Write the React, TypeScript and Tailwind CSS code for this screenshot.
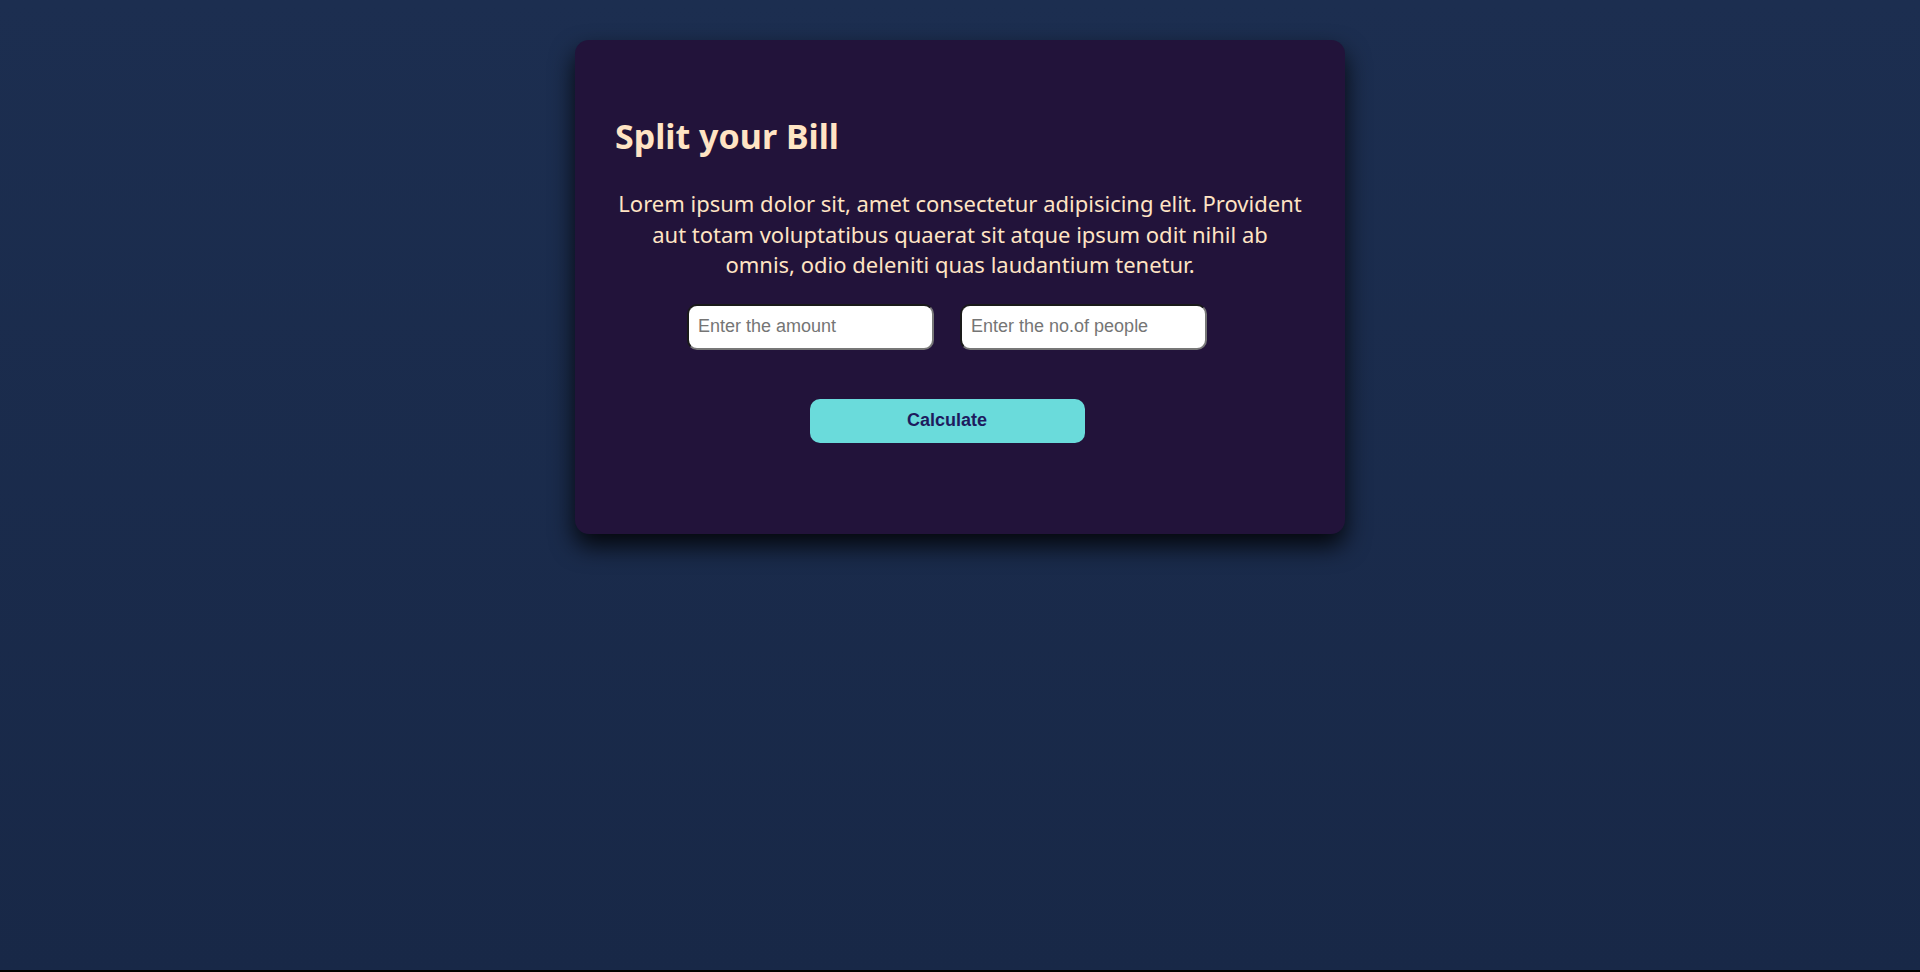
import { useState } from "react";

export default function App() {
  const [amount, setAmount] = useState("");
  const [people, setPeople] = useState("");

  return (
    <div className="h-[972px] bg-black">
      <div className="flex h-[970px] justify-center bg-gradient-to-b from-[#1c2e50] to-[#182847] pt-10">
        <div className="h-[494px] w-[770px] rounded-[14px] bg-[#22133a] px-10 pt-[74px] shadow-[0_12px_24px_rgba(0,0,0,0.85)]">
          <h1 className="font-['Noto_Sans',sans-serif] text-[34px] font-bold leading-[44px] text-[#ffe4c4]">
            Split your Bill
          </h1>

          <p className="mt-[30px] text-center font-['Noto_Sans',sans-serif] text-[22px] leading-[30.6px] text-[#ffe4c4]">
            Lorem ipsum dolor sit, amet consectetur adipisicing elit. Provident
            <br />
            aut totam voluptatibus quaerat sit atque ipsum odit nihil ab
            <br />
            omnis, odio deleniti quas laudantium tenetur.
          </p>

          <div className="mt-[24px] flex justify-center">
            <input
              type="text"
              value={amount}
              onChange={(e) => setAmount(e.target.value)}
              placeholder="Enter the amount"
              className="mr-[26px] h-[46px] w-[247px] rounded-[10px] border-2 border-t-[#1a1a1a] border-l-[#1a1a1a] border-b-[#777] border-r-[#777] bg-white pl-[9px] pr-2 font-['Liberation_Sans',sans-serif] text-[18px] text-black outline-none placeholder:text-[#757575]"
            />
            <input
              type="text"
              value={people}
              onChange={(e) => setPeople(e.target.value)}
              placeholder="Enter the no.of people"
              className="mr-[26px] h-[46px] w-[247px] rounded-[10px] border-2 border-t-[#1a1a1a] border-l-[#1a1a1a] border-b-[#777] border-r-[#777] bg-white pl-[9px] pr-2 font-['Liberation_Sans',sans-serif] text-[18px] text-black outline-none placeholder:text-[#757575]"
            />
          </div>

          <div className="mt-[49px] flex justify-center">
            <button
              type="button"
              className="mr-[26px] h-[44px] w-[275px] rounded-[10px] bg-[#6adbdb] font-['Liberation_Sans',sans-serif] text-[18px] font-bold text-[#1e1b5e]"
            >
              Calculate
            </button>
          </div>
        </div>
      </div>
    </div>
  );
}
